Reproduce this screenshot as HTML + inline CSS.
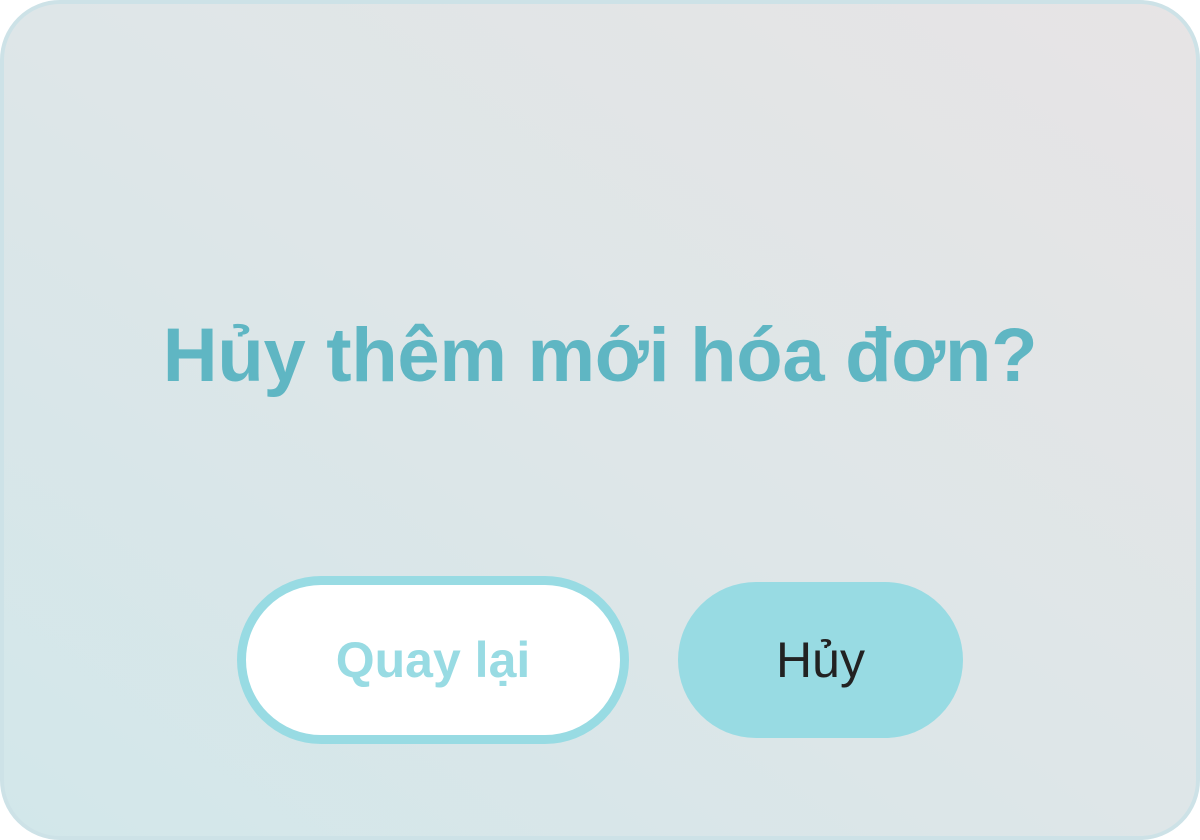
<!DOCTYPE html>
<html><head><meta charset="utf-8"><style>
html,body{margin:0;padding:0;width:1200px;height:840px;overflow:hidden;background:#fff;}
.card{position:absolute;left:0;top:0;width:1200px;height:840px;box-sizing:border-box;border:4px solid #cde2e7;border-radius:60px;
background:linear-gradient(35deg,#d2e7ea 0%,#dee6e8 50%,#e7e4e5 100%);font-family:"Liberation Sans",sans-serif;}
.title{position:absolute;left:0;width:1192px;top:307px;text-align:center;font-size:76px;font-weight:bold;color:#5fb6c3;letter-spacing:-0.3px;line-height:90px;}
.b1{position:absolute;left:233px;top:572px;width:392px;height:168px;box-sizing:border-box;border:9px solid #98dbe3;border-radius:84px;background:#fff;color:#98dbe3;font-weight:bold;font-size:50px;display:flex;align-items:center;justify-content:center;}
.b2{position:absolute;left:674px;top:578px;width:285px;height:156px;border-radius:78px;background:#98dbe3;color:#222;font-size:50px;display:flex;align-items:center;justify-content:center;}
</style></head><body>
<div class="card">
<div class="title">Hủy thêm mới hóa đơn?</div>
<div class="b1">Quay lại</div>
<div class="b2">Hủy</div>
</div>
</body></html>
